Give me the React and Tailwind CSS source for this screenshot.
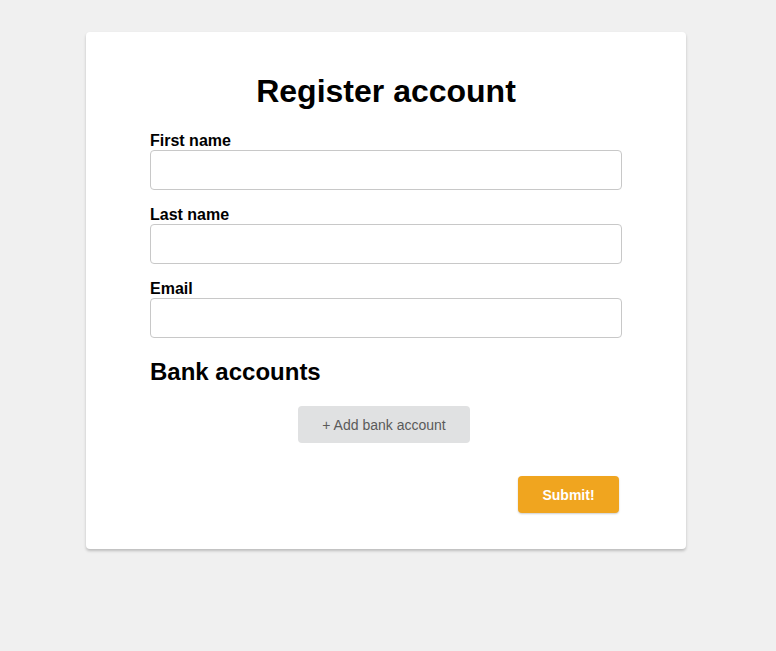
import React from 'react';

const FIELDS = [
  { id: 'first', label: 'First name', type: 'text' },
  { id: 'last', label: 'Last name', type: 'text' },
  { id: 'email', label: 'Email', type: 'email' },
];

export default function App() {
  return (
    <div className="min-h-screen bg-[#f0f0f0] pt-8 pr-1 flex justify-center font-['Liberation_Sans',Arial,sans-serif] text-black">
      <div className="w-[600px] h-fit bg-white rounded-[4px] shadow-[0_2px_3px_rgba(0,0,0,0.22)] px-16 pt-[41px] pb-[36px]">
        <h1 className="text-[32px] font-bold text-center leading-[37px]">Register account</h1>

        <form className="mt-[22px]" onSubmit={e => e.preventDefault()}>
          {FIELDS.map(f => (
            <div key={f.id} className="mb-4">
              <label htmlFor={f.id} className="block text-base font-bold leading-[18px]">{f.label}</label>
              <input
                id={f.id}
                type={f.type}
                className="block w-full h-10 border border-[#c8c8c8] rounded-[4px] px-3 outline-none"
              />
            </div>
          ))}

          <h2 className="mt-[20px] text-2xl font-bold leading-[28px]">Bank accounts</h2>

          <div className="flex justify-center mt-[20px] pr-1">
            <button type="button" className="h-[37px] px-6 bg-[#e0e1e2] text-[#5a5a5a] text-sm rounded-[4px]">
              + Add bank account
            </button>
          </div>

          <div className="flex justify-end mt-[33px] pr-[3px]">
            <button type="submit" className="h-[37px] w-[101px] bg-[#f0a51f] text-white text-sm font-bold rounded-[4px] shadow-[0_1px_2px_rgba(0,0,0,0.2)]">
              Submit!
            </button>
          </div>
        </form>
      </div>
    </div>
  );
}
